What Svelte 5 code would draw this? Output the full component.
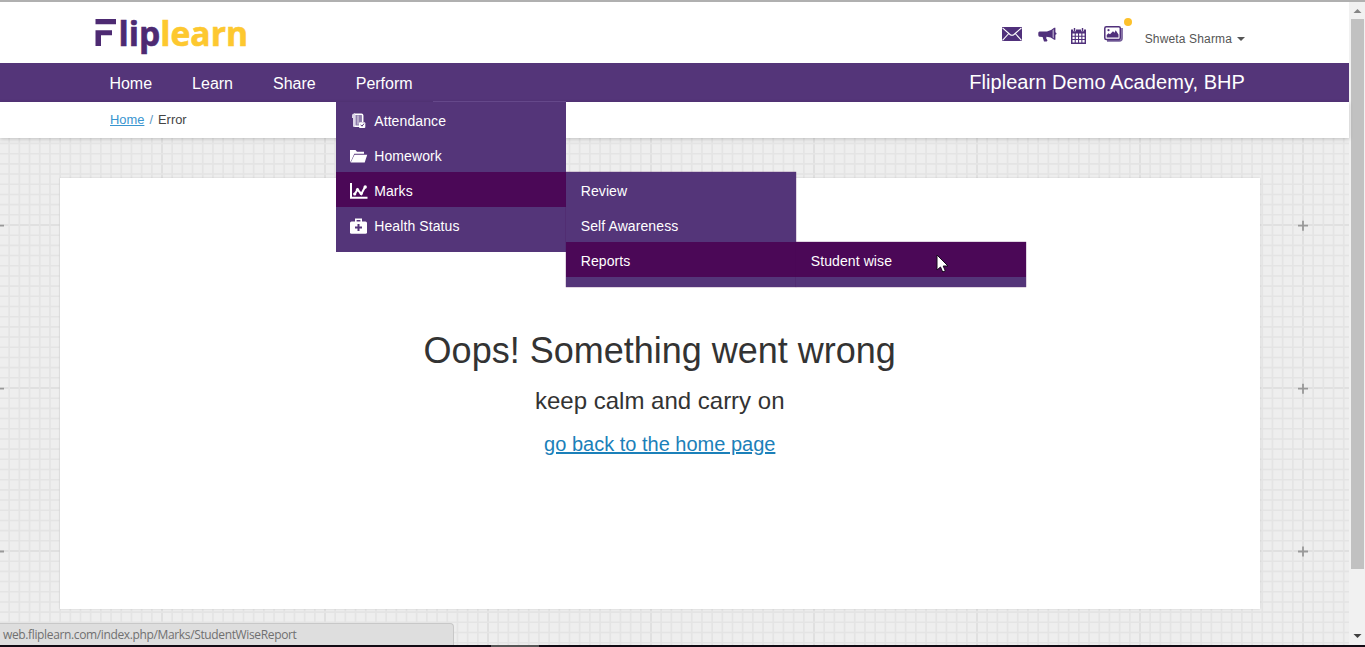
<script>
  const nav = ['Home', 'Learn', 'Share'];
  const minor = Array.from({ length: 16 }, (_, i) => i * 10.1875 + 1);
</script>

<div class="screen">
  <div class="page">
    <header class="top">
      <svg class="logo" width="164" height="53" viewBox="0 0 164 53" role="img" aria-label="Fliplearn">
        <path fill="#4d2a72" d="M3.5 8H24v5.3H3.5zM3.5 19.3H20v5H9V35H3.5z" />
        <text x="26.5" y="34.7" textLength="129.5" lengthAdjust="spacingAndGlyphs"><tspan class="lip">lip</tspan><tspan class="learn">learn</tspan></text>
      </svg>
      <div class="tools">
        <svg class="mail" width="20" height="14" viewBox="0 0 20 14"><path fill="#50307b" d="M0 0h20v14H0z" /><path d="M.5 .8 8 7.5q2 1.6 4 0L19.5.8M.5 13.3 6.8 6.5M19.5 13.3 13.2 6.5" fill="none" stroke="#fff" stroke-width="1.1" /></svg>
        <svg class="horn" width="19" height="16" viewBox="0 0 19 16"><path fill="#50307b" d="M1.5 4.5H9Q13 3.8 16.2.8h1.2v4.4q2.4 1.3 0 2.6v5h-1.2Q13 10 8.5 9.8l-.3 1.4 1.3 2.3-.8 1H6L4.6 10l-3.1-.3Q.3 9.5.3 8V6q0-1.5 1.2-1.5z" /><path d="M14.5 3.3 16 2.2v9.2l-1.5-1.1z" fill="#a696bd" /></svg>
        <svg class="calendar" width="15" height="16" viewBox="0 0 15 16"><path fill="#50307b" d="M0 1.5h15V16H0z" /><path fill="#fff" d="M1.5 5.5h2.2v2.2H1.5zm3.3 0H7v2.2H4.8zm3.3 0h2.2v2.2H8.1zm3.3 0h2.2v2.2h-2.2zM1.5 8.8h2.2V11H1.5zm3.3 0H7V11H4.8zm3.3 0h2.2V11H8.1zm3.3 0h2.2V11h-2.2zM1.5 12.1h2.2v2.4H1.5zm3.3 0H7v2.4H4.8zm3.3 0h2.2v2.4H8.1zm3.3 0h2.2v2.4h-2.2z" /><path d="M3.5 0v3.3M11.5 0v3.3" stroke="#fff" stroke-width="2.8" /><path d="M3.5 0v3.3M11.5 0v3.3" stroke="#50307b" stroke-width="1.4" /></svg>
        <span class="photos">
          <svg width="19" height="16" viewBox="0 0 19 16"><path d="M3 14.8h12.5q2.5 0 2.5-2.5V2" fill="none" stroke="#76609a" stroke-width="1.7" /><rect x=".8" y=".8" width="15.5" height="12.6" rx="1.5" fill="#fff" stroke="#50307b" stroke-width="1.5" /><path fill="#50307b" d="M2.7 11.5V9l1.8-1.7L6 8.3l3-3 1.5 1.4 1.2-2.5 2.8 4.3v3z" /><circle cx="4.5" cy="4.2" r="1.1" fill="#50307b" /></svg>
          <i class="dot"></i>
        </span>
        <span class="user">Shweta Sharma <i class="caret"></i></span>
      </div>
    </header>

    <nav class="bar">
      <div class="links">
        {#each nav as item}<a href="#top">{item}</a>{/each}
        <div class="perform">
          <a href="#top">Perform</a>
          <ul class="menu main">
            <li>
              <svg width="18" height="16" viewBox="0 0 18 16"><path d="M4 1h7.5q1 0 1 1v11.5H4.5z" fill="#8d7bab" /><path d="M4 1.2h7.5q1.2 0 1.2 1.3V9M4.7 2v11.2H9" fill="none" stroke="#fff" stroke-width="1.5" /><path d="M2 2.5Q2 .6 4 .6h1v13.2H3V5H2z" fill="#ddd5e7" /><path d="M8 2.5v9" stroke="#b9acca" stroke-width="2" /><rect x="9" y="9.2" width="6.3" height="5.8" rx="1" fill="#fff" /><path d="m10.6 11.7 1.4 1.5 2-2.6" fill="none" stroke="#54357a" /></svg>
              Attendance
            </li>
            <li>
              <svg width="18" height="16" viewBox="0 0 18 16"><path fill="#fff" d="M0 14.5V2h5.5L7 3.8h7v2H4.3L1.5 12z" /><path fill="#fff" d="M4.5 6.8h12.7L14.7 14.5H.7z" /></svg>
              Homework
            </li>
            <li class="on">
              <svg width="18" height="16" viewBox="0 0 18 16"><path d="M1 0v14.8h16.5" fill="none" stroke="#fff" stroke-width="2" /><path d="m4.5 11.5 3-5 3.8 4.5L15 4" fill="none" stroke="#fff" stroke-width="2" /><g fill="#fff"><circle cx="4.7" cy="11" r="1.6" /><circle cx="7.5" cy="6.5" r="1.6" /><circle cx="11.2" cy="10.5" r="1.6" /><circle cx="15.2" cy="4" r="1.7" /></g></svg>
              Marks
              <ul class="menu sub">
                <li>Review</li>
                <li>Self Awareness</li>
                <li class="on">Reports
                  <ul class="menu sub"><li class="on">Student wise</li></ul>
                </li>
              </ul>
            </li>
            <li>
              <svg width="18" height="16" viewBox="0 0 18 16"><path d="M5.8 4V1.3h5.4V4" fill="none" stroke="#fff" stroke-width="1.6" /><rect y="3.5" width="17" height="12.2" rx="1.5" fill="#fff" /><path d="M8.5 6v7M5 9.5h7" stroke="#54357a" stroke-width="2" /></svg>
              Health Status
            </li>
          </ul>
        </div>
      </div>
      <strong class="school">Fliplearn Demo Academy, BHP</strong>
    </nav>

    <div class="crumbs"><a href="#top">Home</a><span class="slash">/</span><span>Error</span></div>

    <main>
      <svg class="paper" width="100%" height="100%" aria-hidden="true">
        <defs>
          <pattern id="grid" x="-2" y="86" width="163" height="163" patternUnits="userSpaceOnUse">
            <rect width="163" height="163" fill="#eeeeee" />
            {#each minor as p, i}
              <path d="M{p} 0V163M0 {p}H163" stroke={i ? '#e4e4e4' : '#dcdcdc'} stroke-width={i ? 1.6 : 1.5} />
            {/each}
          </pattern>
        </defs>
        <rect width="100%" height="100%" fill="url(#grid)" />
        {#each [87.7, 250.7, 413.5] as y}
          <path d="M0 {y}H4M1298 {y}h10M1303 {y - 5}v10" stroke="#999" stroke-width="1.8" />
        {/each}
      </svg>
      <section class="card">
        <h1>Oops! Something went wrong</h1>
        <h2>keep calm and carry on</h2>
        <a href="#top">go back to the home page</a>
      </section>
    </main>
  </div>

  <aside class="scroll">
    <svg width="16" height="17" viewBox="0 0 16 17"><path d="m4.5 11 4-4 4 4z" fill="#858585" /></svg>
    <div class="thumb"></div>
    <svg class="down" width="16" height="17" viewBox="0 0 16 17"><path d="m4.5 6 4 4 4-4z" fill="#404040" /></svg>
  </aside>

  <div class="status">web.fliplearn.com/index.php/Marks/StudentWiseReport</div>
  <div class="taskbar"><i></i></div>
  <svg class="cursor" width="13" height="20" viewBox="0 0 13 20"><path d="M1 1v15l3.5-3 2.2 5 2.6-1.2L7.2 12H12z" fill="#fff" stroke="#160a1c" /></svg>
</div>

<style>
  :global(body) { margin: 0; overflow: hidden; }
  .screen { position: relative; display: flex; box-sizing: border-box; width: 1365px; height: 647px; padding-bottom: 2px; border-top: 2px solid #b0b0b0; overflow: hidden; background: #fff; font-family: 'Liberation Sans', Arial, sans-serif; }
  .page { display: flex; flex-direction: column; width: 1349px; }
  .top { display: flex; justify-content: space-between; height: 61px; box-sizing: border-box; padding: 9px 104px 0 92px; }
  .logo { overflow: visible; }
  .logo text { font: 700 34px 'Open Sans', sans-serif; stroke-width: .6px; }
  .lip { fill: #4d2a72; stroke: #4d2a72; }
  .learn { fill: #fdc82f; stroke: #fdc82f; }
  .tools { display: flex; align-items: flex-start; padding-top: 1px; }
  .mail { margin-top: 15px; }
  .horn { margin: 15px 0 0 16px; }
  .calendar { margin: 16px 0 0 14px; }
  .photos { position: relative; margin: 14px 0 0 18px; }
  .photos svg { display: block; }
  .dot { position: absolute; left: 20px; top: -8px; width: 8px; height: 8px; border-radius: 50%; background: #fdc12b; }
  .user { display: flex; align-items: center; margin: 20px 0 0 22px; color: #555; font-size: 12px; line-height: 14px; letter-spacing: .15px; white-space: nowrap; }
  .caret { margin-left: 5px; border: 4px solid transparent; border-top-color: #555; border-bottom: 0; }
  .bar { display: flex; justify-content: space-between; height: 39px; padding: 0 104px 0 89.4px; background: #543579; }
  .links { display: flex; }
  .links a { display: block; padding: 0 20px; color: #fff; font-size: 16px; line-height: 41px; text-decoration: none; }
  .school { color: #fff; font-size: 20px; font-weight: 400; line-height: 38px; letter-spacing: .06px; }
  .perform { position: relative; }
  .menu { position: absolute; z-index: 3; top: 39px; left: 0; width: 230px; box-sizing: border-box; margin: 0; padding: 0 0 10px; list-style: none; background: #543579; }
  .menu li { position: relative; display: flex; align-items: center; box-sizing: border-box; height: 35px; padding: 2px 0 0 15px; color: #fff; font-size: 14px; letter-spacing: .1px; }
  .menu.main > li { padding-left: 14.5px; }
  .menu li svg { margin-right: 6px; }
  .menu .on { background: #4b0857; }
  .menu.main::before { position: absolute; top: -1px; right: 0; width: 133px; height: 1px; background: #65488a; content: ''; }
  .menu.sub { top: 0; left: 230px; box-shadow: 0 0 1px #4b0857; }
  .crumbs { position: relative; z-index: 1; display: flex; box-sizing: border-box; height: 36px; padding: 10px 0 0 110px; background: #fff; box-shadow: 0 1px 4px #0003; color: #444; font-size: 12.9px; line-height: 16px; }
  .crumbs a { color: #3995d0; }
  .slash { margin: 0 5px; color: #5b95bd; }
  main { position: relative; flex: 1; box-sizing: border-box; padding: 40px 89px 36px 60px; background: #eee; }
  .paper { position: absolute; inset: 0; }
  .card { position: relative; box-sizing: border-box; height: 431px; padding: 153px .5px 0 0; background: #fff; box-shadow: 0 0 2px #0002; text-align: center; color: #333; }
  h1, h2 { margin: 0; font-weight: 400; }
  h1 { font-size: 36px; line-height: 40px; }
  h2 { margin: 16px 0 15px; font-size: 24px; line-height: 28px; }
  .card a { color: #1b80b9; font-size: 20px; line-height: 28px; }
  .scroll { display: flex; flex-direction: column; width: 16px; background: #f1f1f1; }
  .scroll svg { flex: none; }
  .thumb { width: 13px; height: 550px; margin-left: 2px; background: #c1c1c1; }
  .down { margin-top: auto; }
  .status { position: absolute; z-index: 5; left: 0; bottom: 2px; box-sizing: border-box; width: 454px; height: 22px; padding-left: 3px; border: solid #c8c8c8; border-width: 1px 1px 0 0; border-radius: 0 4px 0 0; background: #dedede; color: #707070; font: 12px/22px 'Open Sans', sans-serif; letter-spacing: -.36px; }
  .taskbar { position: absolute; z-index: 6; bottom: 0; width: 100%; height: 2px; background: #120b14; }
  .taskbar i { display: block; width: 48px; height: 2px; margin-left: 491px; background: #555; }
  .cursor { position: absolute; z-index: 7; left: 936px; top: 252px; }
</style>
